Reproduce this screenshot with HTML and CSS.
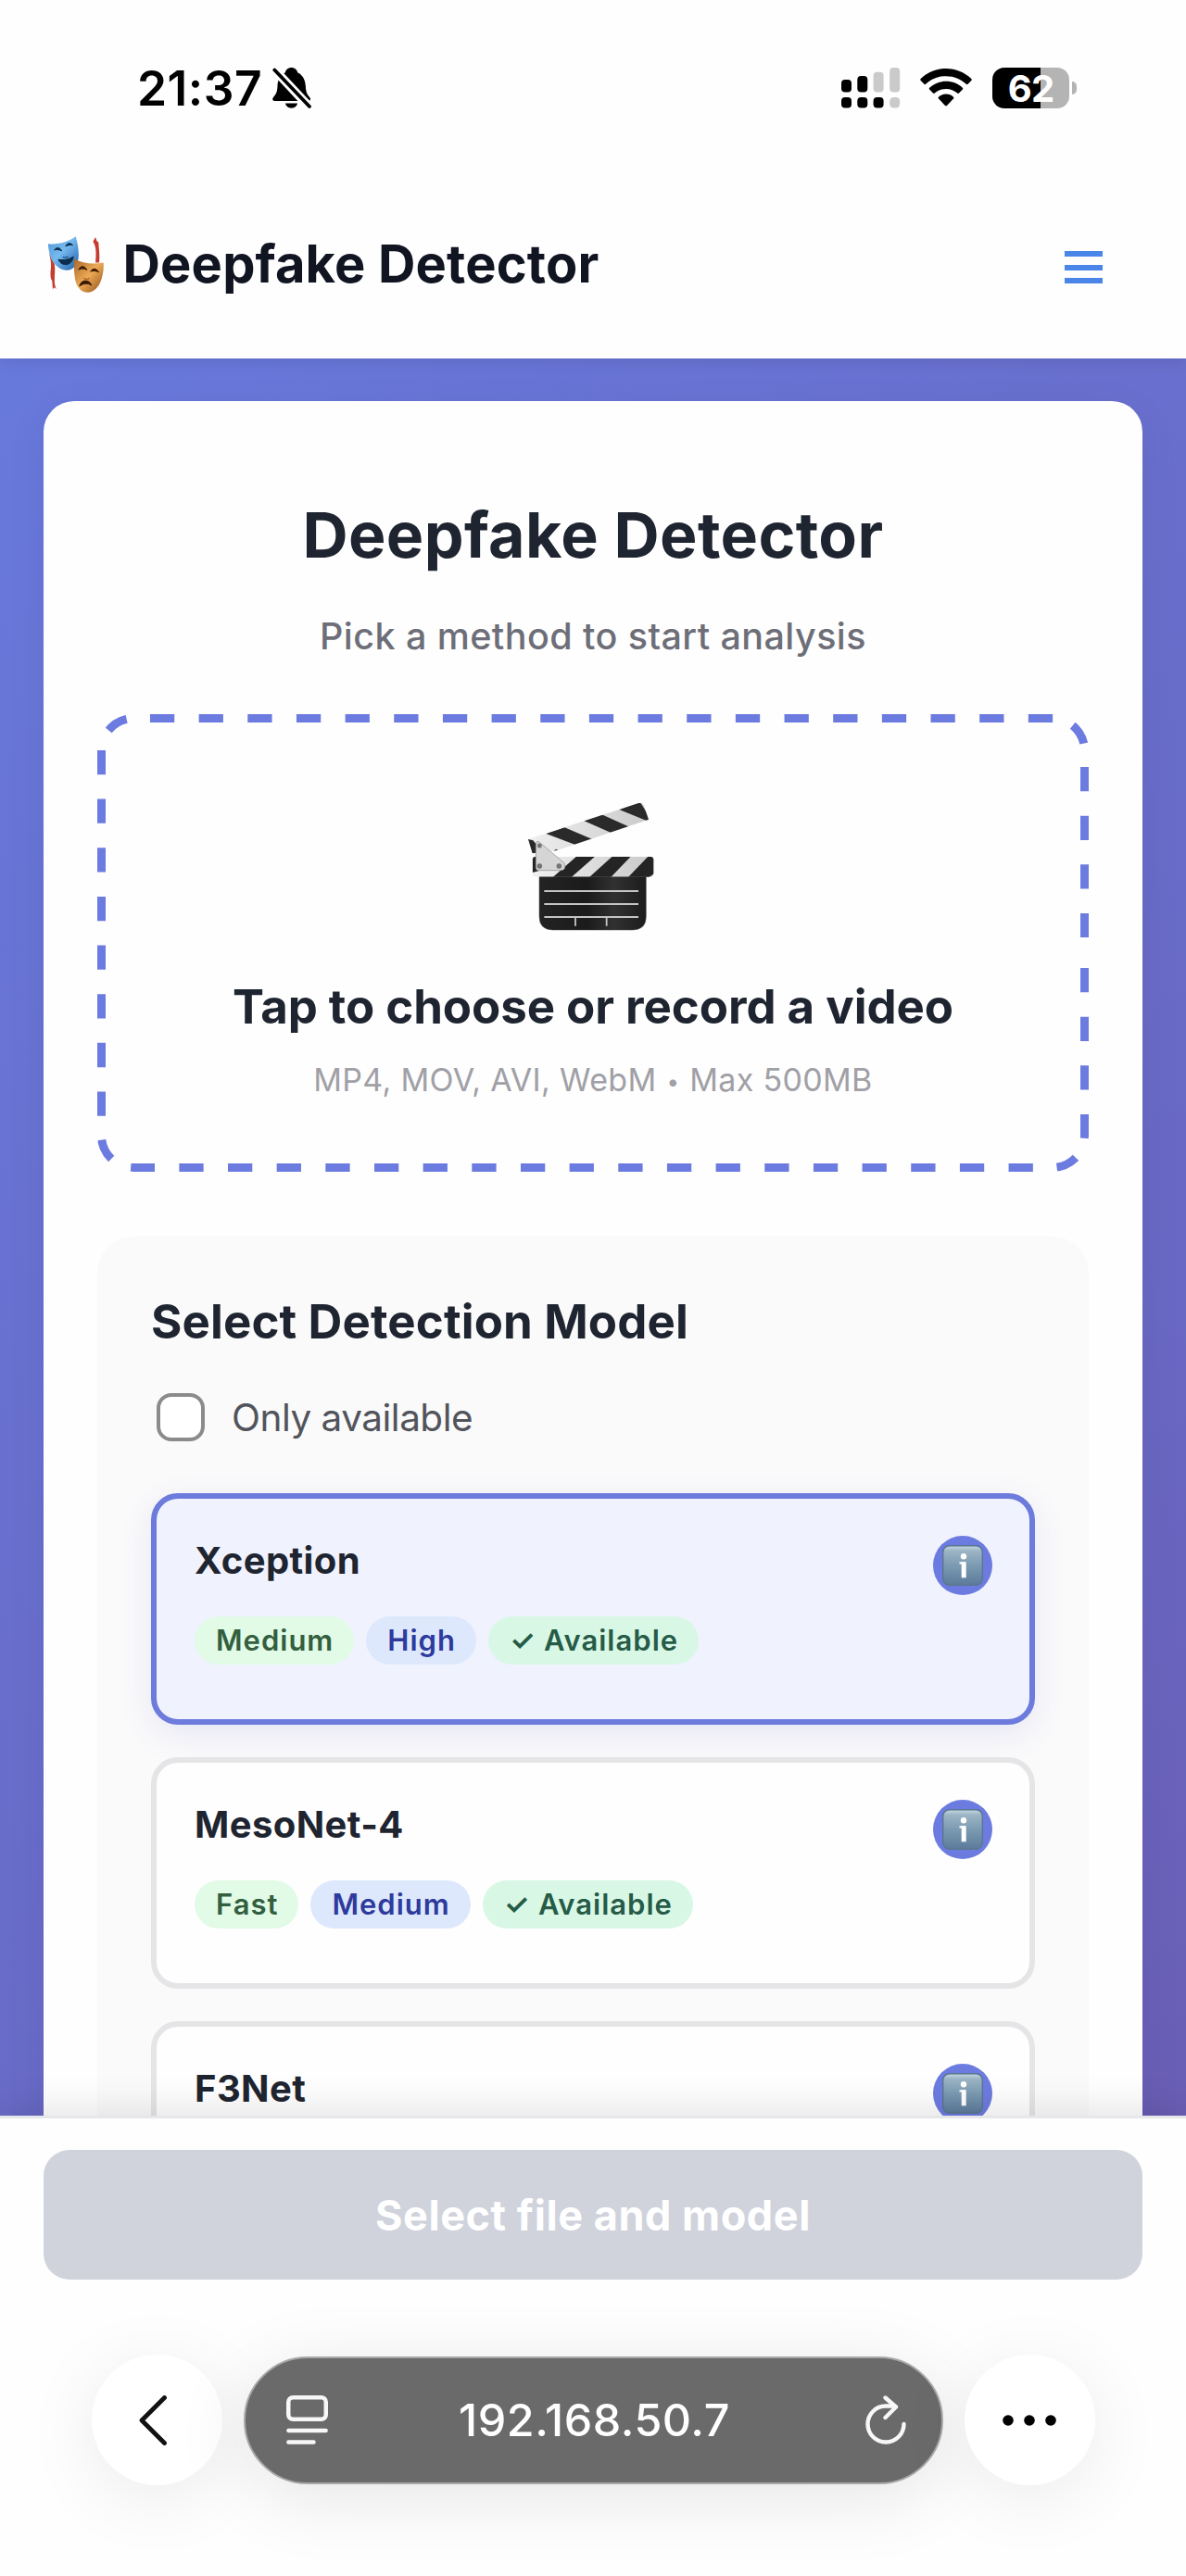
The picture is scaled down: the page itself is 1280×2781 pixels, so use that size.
FILE: index.html
```
<!DOCTYPE html>
<html lang="en">
<head>
<meta charset="utf-8">
<meta name="viewport" content="width=device-width">
<title>Deepfake Detector</title>
<link rel="stylesheet" href="styles.css">
</head>
<body>
<svg class="defs" aria-hidden="true">
  <defs>
    <linearGradient id="infoFill" x1="0" y1="0" x2="0" y2="1">
      <stop offset="0" stop-color="#c3d9e2"/><stop offset=".14" stop-color="#9bb4c4"/><stop offset=".5" stop-color="#7b9ab2"/><stop offset="1" stop-color="#5c7b9c"/>
    </linearGradient>
    <symbol id="info" viewBox="0 0 44 44">
      <rect x=".7" y=".7" width="42.6" height="42.6" rx="7" fill="url(#infoFill)" stroke="#5a7690" stroke-width="1.4"/>
      <circle cx="23" cy="12.2" r="3.2" fill="#fff"/>
      <path d="M18.500 19.300h4.800V35" fill="none" stroke="#fff" stroke-width="2.200"/>
      <path d="M23.200 18.200V35.300" stroke="#fff" stroke-width="5"/>
    </symbol>
  </defs>
</svg>

<div class="status">
  <div class="clock">
    <span class="time">21:37</span>
    <svg class="bell" viewBox="0 0 42 46">
      <path d="M20.500 1c3.500 0 6 2.200 6.600 5.200 5.600 2.600 8.300 8 8.700 14.200.4 7.400 1.700 9.400 4.200 12.300 2 2.400.9 4.300-1.500 4.300H2.600C.2 37-.7 35 1.200 32.700 4 29.400 5.200 27.500 5.500 20.400 5.800 14 8.500 8.700 13.900 6.200 14.500 3.200 17 1 20.500 1z"/>
      <path d="M14 39.500h13c-.6 3.200-3.200 5.200-6.500 5.200s-5.900-2-6.500-5.200z"/>
      <path d="M2 3L40 43.500" stroke="#fff" stroke-width="9.500"/>
      <path d="M2.300 3.500L40 43" stroke="#000" stroke-width="3.800" stroke-linecap="round"/>
    </svg>
  </div>
  <div class="indicators">
    <svg class="signal" viewBox="0 0 64 44">
      <rect y="13" width="11" height="13.500" rx="4"/><rect x="17.300" y="9" width="11" height="17.500" rx="4"/>
      <g fill="#cacaca"><rect x="34.600" y="4.700" width="11" height="21.800" rx="4"/><rect x="52.200" width="11" height="26.500" rx="4"/><rect x="52.200" y="32" width="11" height="11.500" rx="4.500"/></g>
      <rect y="32" width="11" height="11.500" rx="4"/><rect x="17.300" y="32" width="11" height="11.500" rx="4"/><rect x="34.600" y="32" width="11" height="11.500" rx="4"/>
    </svg>
    <svg class="wifi" viewBox="0 0 56 41">
      <path d="M28 0C38.600 0 48.200 4.200 55.300 11c.6.600.6 1.300 0 1.900l-3.700 3.900c-.5.500-1.200.5-1.800 0C44 11.400 36.400 8.200 28 8.200S12 11.400 6.200 16.800c-.6.500-1.300.5-1.800 0L.7 12.900C.1 12.300.1 11.600.7 11 7.800 4.200 17.400 0 28 0z"/>
      <path d="M28 13.800c6.900 0 13.100 2.600 17.800 6.900.6.600.6 1.300.1 1.900L42 26.500c-.5.500-1.200.6-1.800 0-3.200-2.900-7.500-4.600-12.200-4.600s-9 1.700-12.200 4.600c-.6.600-1.300.5-1.800 0l-3.900-3.900c-.5-.6-.5-1.300.1-1.900 4.700-4.300 10.900-6.900 17.800-6.900z"/>
      <path d="M28 27.600c3.100 0 5.900 1.200 8 3.100.6.500.6 1.200 0 1.800l-7 7.400c-.6.600-1.400.6-2 0l-7-7.400c-.6-.6-.6-1.300 0-1.800 2.100-1.900 4.900-3.100 8-3.100z"/>
    </svg>
    <div class="battery"><div class="cell">62</div><div class="cap"></div></div>
  </div>
</div>

<header class="header">
  <svg class="masks" viewBox="30 40 190 190">
    <defs>
      <linearGradient id="blue" x1="0" y1="0" x2="1" y2="1"><stop offset="0" stop-color="#4f95d2"/><stop offset=".45" stop-color="#76baf0"/><stop offset="1" stop-color="#1e5da8"/></linearGradient>
      <linearGradient id="gold" x1="0" y1="0" x2="1" y2="1"><stop offset="0" stop-color="#a8672b"/><stop offset=".5" stop-color="#edaa55"/><stop offset="1" stop-color="#8f4d18"/></linearGradient>
    </defs>
    <path d="M40 98c2 18 6 25 5 45-1 18-4 33 4 46l2 27 5-6 7 5c-8-15-6-26-6-40 2-28 2-42-7-62z" fill="#c43d2e"/>
    <path d="M182 60l8-14 4 12 6 5c0 16 5 36 2 66h-12c2-26 4-50-8-69z" fill="#c43d2e"/>
    <path d="M36 68c35 3 65-6 90-24 4 18 10 38 9 64-1 24-16 47-40 46-28-2-49-28-54-52-3-13-5-23-5-34z" fill="url(#blue)"/>
    <path d="M56 88c7-10 18-10 24 3-9-5-17-5-24-3zM93 76c4-12 15-13 23-4-8-1-16 0-23 4zM69 119c17 3 34 0 49-10-2 30-38 36-49 10z" fill="#0b2c4a" stroke="#0b2c4a" stroke-width="3" stroke-linejoin="round"/>
    <path d="M84 110c5 5 11 3 17-1" fill="none" stroke="#1d5690" stroke-width="4"/>
    <path d="M121 117c28 15 60 19 95 12 1 15 0 36-8 58-8 23-25 40-45 39-25-1-37-24-40-48-3-21-4-42-2-61z" fill="url(#gold)"/>
    <path d="M135 152c7-14 19-14 27 1-9-6-18-6-27-1zM174 158c7-12 20-11 26 2-9-5-17-5-26-2zM138 206c3-22 32-25 39-3-12-8-26-7-39 3z" fill="#3b1b08" stroke="#3b1b08" stroke-width="3" stroke-linejoin="round"/>
    <path d="M152 180c6 4 12 4 18 0" fill="none" stroke="#a76025" stroke-width="4"/>
  </svg>
  <span class="brand">Deepfake Detector</span>
  <div class="menu"><i></i><i></i><i></i></div>
</header>

<main class="page">
  <section class="card">
    <h1>Deepfake Detector</h1>
    <p class="sub">Pick a method to start analysis</p>

    <div class="drop">
      <svg class="dash" viewBox="0 0 1070 494">
        <path d="M1070 274V455A39 39 0 0 1 1031 494H39A39 39 0 0 1 0 455V39A39 39 0 0 1 39 0H1031A39 39 0 0 1 1070 39V241" fill="none" stroke="#6c7bdf" stroke-width="18" stroke-dasharray="26.3 26.360"/>
      </svg>
      <svg class="clapper" viewBox="0 0 600 570">
        <defs>
          <linearGradient id="slate" x1="0" y1="0" x2="1" y2="0"><stop offset="0" stop-color="#232323"/><stop offset=".45" stop-color="#1b1b1b"/><stop offset=".7" stop-color="#313131"/><stop offset="1" stop-color="#1c1c1c"/></linearGradient>
          <linearGradient id="silver" x1="0" y1="0" x2="1" y2="0"><stop offset="0" stop-color="#f0f0f0"/><stop offset="1" stop-color="#c9c9c9"/></linearGradient>
          <clipPath id="armClip"><path d="M90 198L448 81Q460 78 464 88L480 134L184 234L104 244z"/></clipPath>
          <clipPath id="barClip"><rect x="104" y="254" width="392" height="66" rx="11"/></clipPath>
        </defs>
        <g clip-path="url(#armClip)">
          <rect x="80" y="70" width="410" height="180" fill="url(#silver)"/>
          <path d="M84 196l22 6 36 44H84zM148 180l60-20 95 40-60 16zM270 138l58-20 90 40-58 20zM385 102l66-26 40 62-12 2zM160 246l20-16 20 10z" fill="#2a2a2a"/>
        </g>
        <path d="M130 314H472V448Q472 492 428 492H170Q126 492 126 448V314z" fill="url(#slate)" stroke="#555" stroke-width="1.500"/>
        <g clip-path="url(#barClip)">
          <rect x="104" y="254" width="392" height="66" fill="url(#silver)"/>
          <path d="M104 254h22v46l-22 6zM246 254h60l-76 67h-60zM362 254h60l-64 67h-70zM478 254h20v55l-16 12h-68z" fill="#242424"/>
        </g>
        <path d="M126 207L208 276Q214 298 196 299H124Q115 299 115 290V218Q115 200 126 207z" fill="#d5d5d5" stroke="#8a8a8a" stroke-width="2"/>
        <g fill="#777" stroke="#555" stroke-width="1.500"><circle cx="127" cy="219" r="6.500"/><circle cx="127" cy="285" r="7.500"/><circle cx="190" cy="285" r="7.500"/></g>
        <path d="M142 366H447M142 408H447M142 450H447M243 450v29M344 450v29" stroke="#c4c4c4" stroke-width="5.500"/>
      </svg>
      <p class="drop-title">Tap to choose or record a video</p>
      <p class="drop-note">MP4, MOV, AVI, WebM <span class="bullet">•</span> Max 500MB</p>
    </div>

    <div class="panel">
      <h2>Select Detection Model</h2>
      <div class="filter"><span class="box"></span><span>Only available</span></div>
      <div class="models">
        <article class="model selected">
          <div><h3>Xception</h3>
            <div class="tags"><span class="tag speed">Medium</span><span class="tag accuracy">High</span><span class="tag ready">✓ Available</span></div></div>
          <div class="info"><svg viewBox="0 0 44 44"><use href="#info"/></svg></div>
        </article>
        <article class="model">
          <div><h3>MesoNet-4</h3>
            <div class="tags"><span class="tag speed">Fast</span><span class="tag accuracy">Medium</span><span class="tag ready">✓ Available</span></div></div>
          <div class="info"><svg viewBox="0 0 44 44"><use href="#info"/></svg></div>
        </article>
        <article class="model">
          <div><h3>F3Net</h3></div>
          <div class="info"><svg viewBox="0 0 44 44"><use href="#info"/></svg></div>
        </article>
      </div>
    </div>
  </section>
</main>

<div class="action"><div class="button">Select file and model</div></div>

<nav class="browser">
  <div class="round"><svg class="back" viewBox="0 0 30 54"><path d="M27.500 2.500L3 27L27.500 51.500" fill="none" stroke="#111" stroke-width="4.800" stroke-linecap="round" stroke-linejoin="round"/></svg></div>
  <div class="address">
    <svg class="reader" viewBox="0 0 45 53"><g fill="none" stroke="#f7f7f7" stroke-width="4.500" stroke-linecap="round"><rect x="2.250" y="2.250" width="40.500" height="23.500" rx="5"/><path d="M2.400 38H42.600M2.400 50.500H29.500"/></g></svg>
    <span class="url">192.168.50.7</span>
    <svg class="reload" viewBox="0 0 44 54"><g fill="none" stroke="#f7f7f7" stroke-width="4.400" stroke-linecap="round" stroke-linejoin="round"><path d="M41.500 31A19.500 19.500 0 1 1 22 11.500H31"/><path d="M21.500 2.500L33 12.500L21.500 24"/></g></svg>
  </div>
  <div class="round"><svg class="dots" viewBox="0 0 58 12"><circle cx="6" cy="6" r="5.800"/><circle cx="29" cy="6" r="5.800"/><circle cx="52" cy="6" r="5.800"/></svg></div>
</nav>
</body>
</html>
```
FILE: styles.css
```
* { box-sizing: border-box; margin: 0; padding: 0; }

body {
  display: flex;
  flex-direction: column;
  width: 1280px;
  height: 2781px;
  overflow: hidden;
  background: #fefefe;
  color: #1f2530;
  font-family: Inter, "Liberation Sans", sans-serif;
}

svg { display: block; flex: none; }
.defs { position: absolute; width: 0; height: 0; }

/* Phone status bar */
.status {
  display: flex;
  flex: none;
  justify-content: space-between;
  align-items: center;
  height: 189px;
  padding: 0 118px 0 148px;
  position: relative;
  z-index: 2;
  background: #fefefe;
}
.clock { display: flex; align-items: center; gap: 11px; color: #000; }
.time { font-size: 51.5px; font-weight: 600; line-height: 60px; letter-spacing: .5px; }
.bell { width: 42px; height: 46px; }
.indicators { display: flex; align-items: center; }
.signal { width: 64px; height: 44px; margin-right: 21px; }
.wifi { width: 56px; height: 41px; margin-right: 22px; }
.battery { display: flex; align-items: center; gap: 2.5px; }
.cell {
  width: 83px;
  height: 44px;
  border-radius: 13px;
  background: linear-gradient(90deg, #000 51.5px, #b4b4b4 51.5px);
  color: #fff;
  font-size: 40px;
  font-weight: 700;
  line-height: 45px;
  letter-spacing: -.9px;
  text-align: center;
}
.cap { width: 5.5px; height: 14px; border-radius: 0 6px 6px 0; background: #b4b4b4; }

/* App header */
.header {
  display: flex;
  flex: none;
  align-items: center;
  height: 198px;
  padding: 0 90px 6px 50px;
  position: relative;
  z-index: 1;
  background: #fefefe;
  box-shadow: 0 3px 16px rgba(0, 0, 0, .1);
}
.masks { width: 63px; height: 63px; }
.brand { margin-left: 19.5px; color: #111522; font-size: 56px; font-weight: 700; line-height: 70px; letter-spacing: .16px; }
.menu { display: flex; flex-direction: column; gap: 8.5px; width: 41px; margin: 7px 0 0 auto; }
.menu i { height: 6px; background: #4a85e8; }

/* Page */
.page {
  flex: none;
  height: 1897px;
  padding: 46px 47px 0;
  overflow: hidden;
  background: linear-gradient(135deg, #6879dc 0%, #6967c2 75%, #6a5eb5 100%);
}
.card {
  height: 2300px;
  padding: 104px 58px 0;
  border-radius: 33px;
  background: #fefefe;
  box-shadow: 0 10px 50px rgba(0, 0, 0, .05);
}
h1 { font-size: 68px; font-weight: 700; line-height: 80px; letter-spacing: .37px; text-align: center; }
.sub { margin-top: 40px; color: #6d6e78; font-size: 39.5px; font-weight: 450; line-height: 60px; letter-spacing: .42px; text-align: center; }

.drop {
  display: flex;
  flex-direction: column;
  align-items: center;
  height: 494px;
  margin-top: 54px;
  padding-top: 69px;
  position: relative;
}
.dash { position: absolute; inset: 0; width: 1070px; height: 494px; border-radius: 39px; overflow: hidden; }
.clapper { width: 200px; height: 190px; }
.drop-title { margin-top: 27px; font-size: 51px; font-weight: 700; line-height: 60px; letter-spacing: -.06px; }
.drop-note { margin-top: 24px; color: #a0a0a6; font-size: 34px; line-height: 50px; letter-spacing: .33px; }
.bullet { display: inline-block; width: 16px; font-size: 24px; line-height: 1; text-align: center; vertical-align: 2px; }

.panel { height: 1200px; margin-top: 70px; padding: 62px 58px 0; border-radius: 39px; background: #fafafb; }
h2 { font-size: 51px; font-weight: 700; line-height: 60px; letter-spacing: .12px; }
.filter { display: flex; align-items: center; gap: 29px; height: 52px; margin: 47px 0 56px 6px; color: #52545c; font-size: 40.5px; letter-spacing: -.5px; }
.box { width: 52px; height: 52px; border: 4.5px solid #8b8b8b; border-radius: 16px; background: #fff; }

.models { display: flex; flex-direction: column; gap: 35px; }
.model {
  display: flex;
  justify-content: space-between;
  height: 250px;
  padding: 40px 40px 0 41px;
  border: 6px solid #e5e5e8;
  border-radius: 29px;
  background: #fefefe;
}
.selected { border-color: #6c7bdc; background: #f0f2fe; box-shadow: 0 10px 34px rgba(90, 90, 190, .12); }
h3 { margin-top: 2px; font-size: 40px; font-weight: 650; line-height: 50px; letter-spacing: .4px; }
.tags { display: flex; gap: 13px; margin-top: 35px; }
.tag { padding: 0 22px 0 23px; border-radius: 26px; font-size: 31px; font-weight: 600; line-height: 52px; letter-spacing: 1px; }
.speed { background: #e1fbe7; color: #335f3f; }
.accuracy { background: #dde8fd; color: #2e3a9c; }
.ready { background: #d8f8e5; color: #265b48; }
.info { display: flex; align-items: center; justify-content: center; width: 64px; height: 64px; border-radius: 50%; background: #6c7be0; }
.info svg { width: 44px; height: 44px; }

/* Bottom action */
.action {
  flex: none;
  height: 215px;
  padding: 34px 47px 0;
  border-top: 3px solid #e6e7ea;
  position: relative;
  z-index: 1;
  background: #fefefe;
  box-shadow: 0 -8px 36px rgba(0, 0, 0, .1);
}
.button {
  height: 140px;
  border-radius: 28px;
  background: #d0d3dc;
  color: #fff;
  font-size: 45px;
  font-weight: 700;
  line-height: 141px;
  letter-spacing: .55px;
  text-align: center;
}

/* Browser toolbar */
.browser {
  display: flex;
  flex: 1;
  align-items: flex-start;
  justify-content: space-between;
  padding: 43px 98.5px 0;
  position: relative;
  z-index: 2;
  background: #fefefe;
}
.round { display: flex; align-items: center; justify-content: center; width: 141px; height: 141px; border-radius: 50%; background: #fff; box-shadow: 0 14px 80px rgba(0, 0, 0, .08); }
.back { width: 30px; height: 54px; margin-right: 9px; }
.dots { width: 58px; height: 12px; }
.address {
  display: flex;
  align-items: center;
  justify-content: space-between;
  width: 755px;
  height: 138px;
  margin-top: 1.5px;
  padding: 0 38px 0 44px;
  border: 2px solid #a8a8a8;
  border-radius: 69px;
  background: #6a6a6b;
  box-shadow: 0 14px 80px rgba(0, 0, 0, .1);
}
.reader { width: 45px; height: 53px; }
.url { margin-right: 4px; color: #fff; font-size: 48.5px; font-weight: 450; letter-spacing: .5px; }
.reload { width: 44px; height: 54px; }
```
